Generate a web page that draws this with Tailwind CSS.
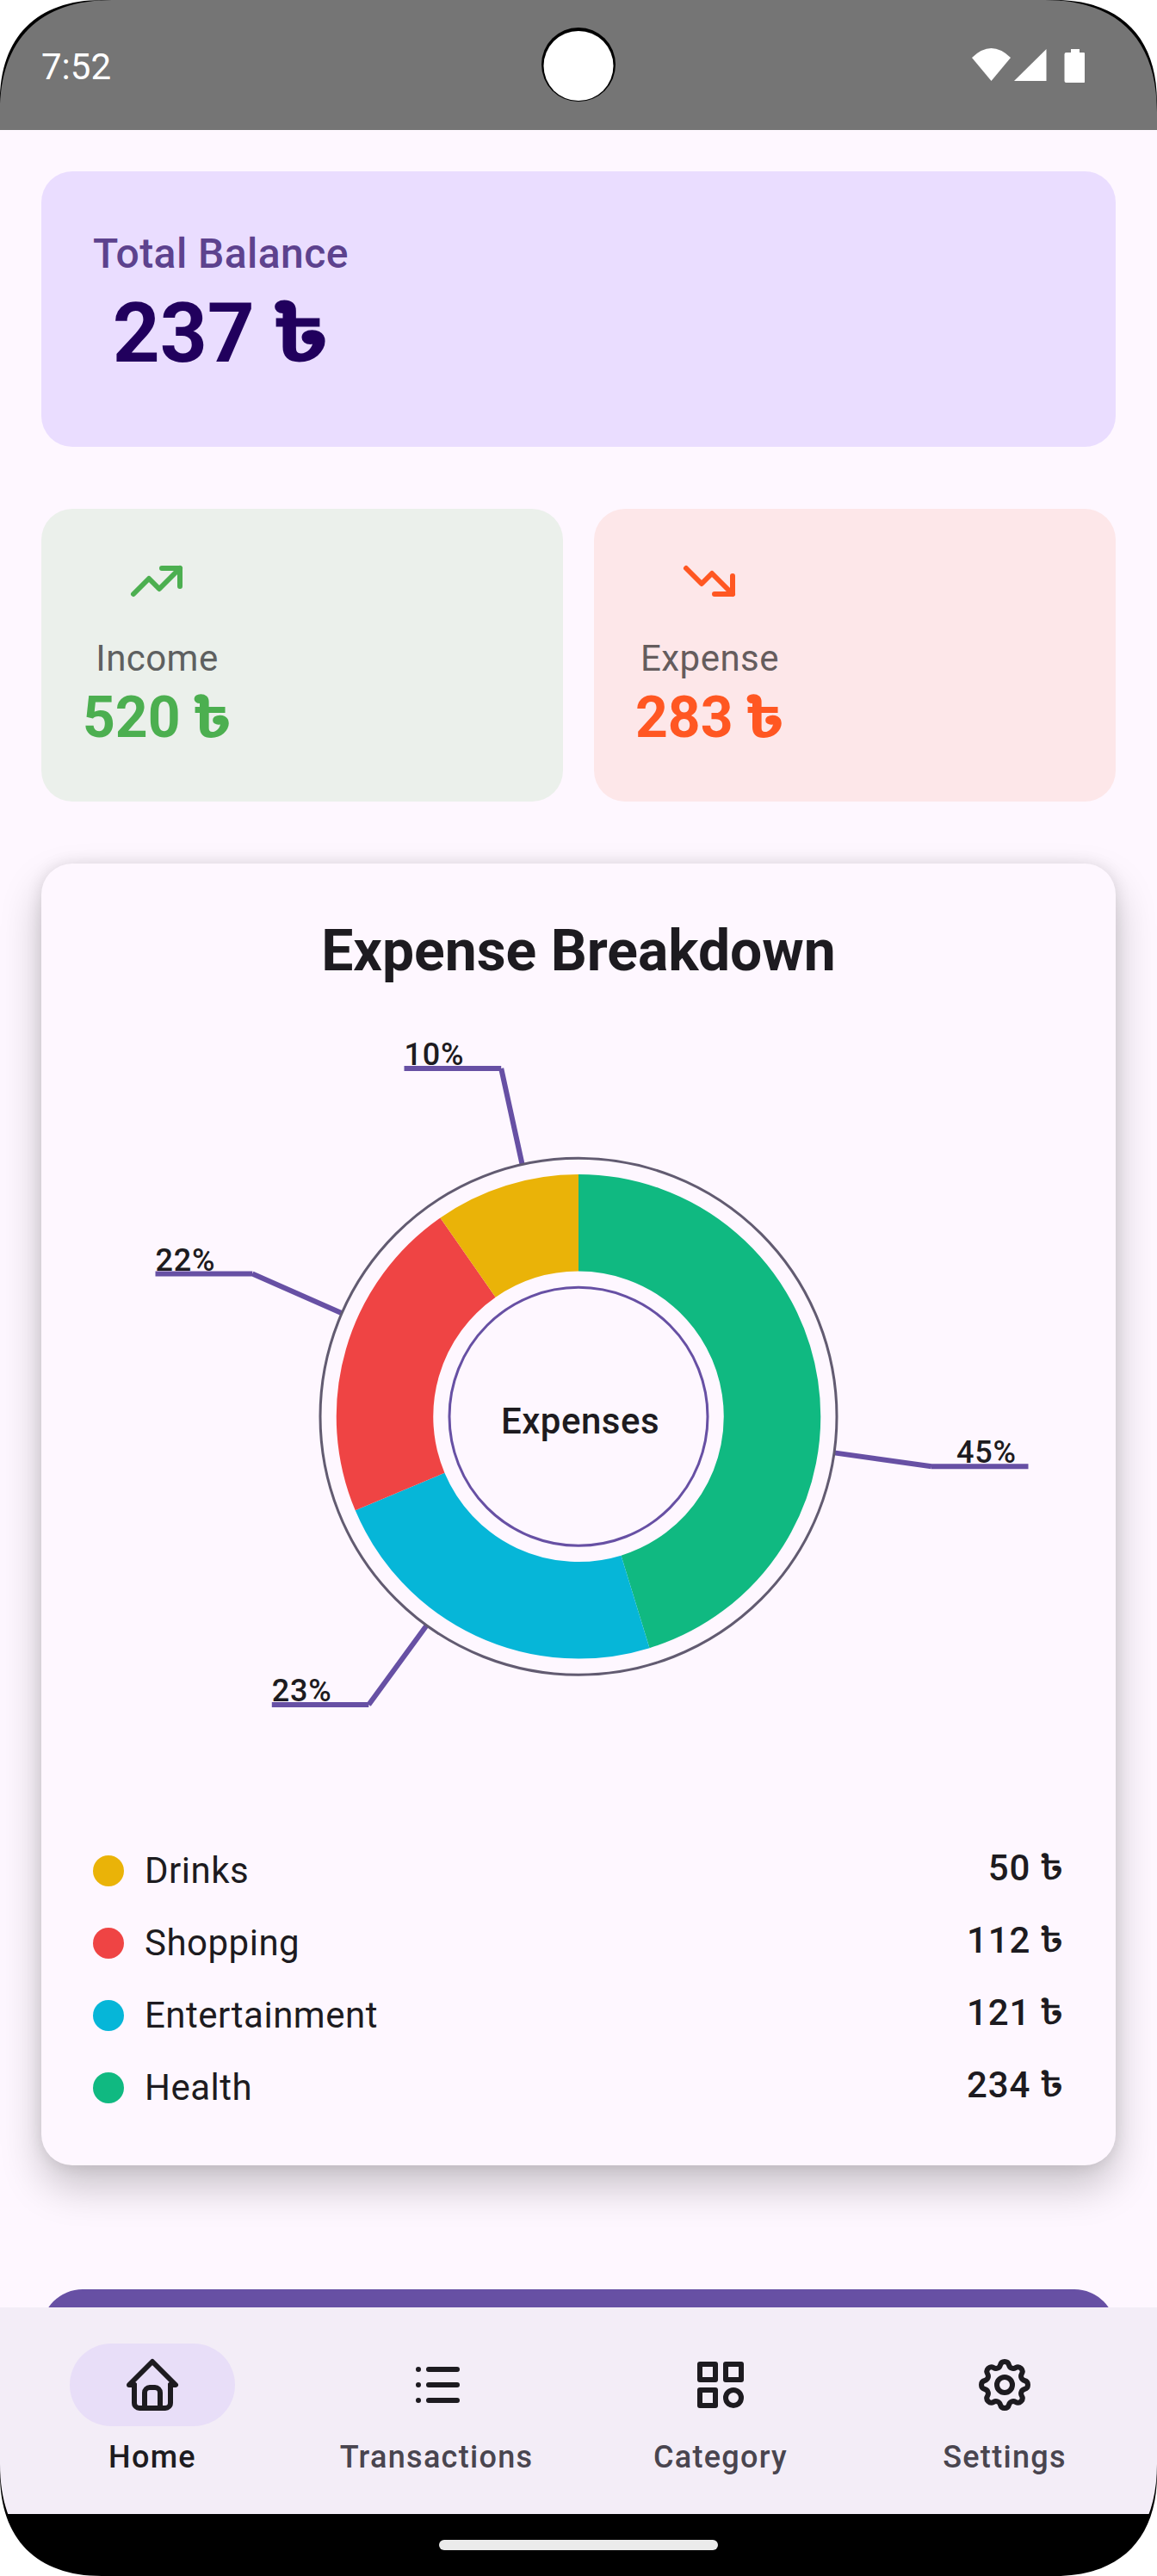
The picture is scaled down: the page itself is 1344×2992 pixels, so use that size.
<!DOCTYPE html>
<html lang="en">
<head>
<meta charset="utf-8">
<title>Expense Tracker</title>
<script src="https://cdn.jsdelivr.net/npm/@tailwindcss/browser@4"></script>
</head>
<body class="bg-white font-['Roboto','Noto_Sans_Bengali','Noto_Sans',sans-serif] text-[#1D1B20]">
<div class="relative flex h-[2992px] w-[1344px] flex-col overflow-hidden bg-[#FEF7FF]">

  <!-- Status bar -->
  <header class="flex h-[151px] shrink-0 items-center justify-between bg-[#757575] pl-12 pr-[84px]">
    <span class="mt-1 text-[42px] leading-[48px] text-white">7:52</span>
    <svg class="h-[42px] w-[131px]" viewBox="0 0 131 42" fill="#fff">
      <path d="M0 12Q22.500 -10 45 12L22.500 39Z"/>
      <path d="M49 39L86.500 2V39Z"/>
      <path d="M115 2h10v4h4.500a2 2 0 0 1 2 2v31a2 2 0 0 1-2 2h-20a2 2 0 0 1-2-2v-31a2 2 0 0 1 2-2h5.500z"/>
    </svg>
  </header>

  <!-- Scrollable content -->
  <main class="flex h-[2529px] shrink-0 flex-col overflow-hidden px-12 pt-12">
    <section class="flex h-[320px] shrink-0 rounded-[36px] bg-[#EADDFF] p-[60px]">
      <div class="flex flex-col items-center">
        <p class="text-[48px] font-medium leading-[72px] tracking-[0.45px] text-[#5D428E]">Total Balance</p>
        <p class="text-[96px] font-bold leading-[113px] text-[#21005D]">237 <span class="inline-block w-[0.65em] origin-[0.3em_80%] scale-x-[1.17] scale-y-[0.93] font-['Noto_Sans_Bengali'] leading-none">৳</span></p>
      </div>
    </section>

    <section class="mt-[72px] flex h-[340px] shrink-0 gap-9">
      <div class="flex flex-1 rounded-[36px] bg-[#EBF0EB] p-12">
        <div class="flex flex-col items-center">
          <svg class="size-[72px]" viewBox="0 0 24 24" fill="none" stroke="#4CAF50" stroke-width="2" stroke-linecap="round" stroke-linejoin="round"><path d="M3 17l6-6l4 4l8-8"/><path d="M14 7h7v7"/></svg>
          <p class="mt-6 text-[42px] leading-[60px] tracking-[0.45px] text-[#5E6060]">Income</p>
          <p class="text-[66px] font-bold leading-[77px] text-[#4CAF50]">520 <span class="inline-block w-[0.65em] origin-[0.3em_80%] scale-x-[1.17] scale-y-[0.93] font-['Noto_Sans_Bengali'] leading-none">৳</span></p>
        </div>
      </div>
      <div class="flex flex-1 rounded-[36px] bg-[#FDE7E9] p-12">
        <div class="flex flex-col items-center">
          <svg class="size-[72px]" viewBox="0 0 24 24" fill="none" stroke="#FF5722" stroke-width="2" stroke-linecap="round" stroke-linejoin="round"><path d="M3 7l6 6l4-4l8 8"/><path d="M21 10v7h-7"/></svg>
          <p class="mt-6 text-[42px] leading-[60px] tracking-[0.45px] text-[#655C5D]">Expense</p>
          <p class="text-[66px] font-bold leading-[77px] text-[#FF5722]">283 <span class="inline-block w-[0.65em] origin-[0.3em_80%] scale-x-[1.17] scale-y-[0.93] font-['Noto_Sans_Bengali'] leading-none">৳</span></p>
        </div>
      </div>
    </section>

    <section class="mt-[72px] flex h-[1512px] shrink-0 flex-col rounded-[36px] bg-[#FEF7FF] px-[60px] pt-[60px] shadow-[0_24px_48px_rgba(0,0,0,0.22),0_0_18px_rgba(0,0,0,0.10)]">
      <h2 class="text-center text-[66px] font-bold leading-[84px]">Expense Breakdown</h2>

      <!-- Donut chart with callouts -->
      <svg class="h-[996px] w-[1128px] shrink-0" viewBox="108 1147 1128 996" fill="none">
        <g stroke="#6750A4" stroke-width="6">
          <path d="M606.500 1352L582.200 1241M582.200 1241H469.500"/>
          <path d="M396.500 1525L293.300 1479.500M293.300 1479.500H180.500"/>
          <path d="M969 1687.400L1082 1703.300M1082 1703.300H1194.500"/>
          <path d="M495.500 1888L428.300 1980M428.300 1980H315.800"/>
        </g>
        <circle cx="672" cy="1645.300" r="300" stroke="#625B71" stroke-width="3"/>
        <g id="slices" stroke-width="112.500"></g>
        <circle cx="672" cy="1645.300" r="150" stroke="#6750A4" stroke-width="3"/>
        <g fill="#1D1B20" class="text-[36px] font-medium tracking-[0.8px]">
          <text x="469.500" y="1237">10%</text>
          <text x="180.500" y="1475.500">22%</text>
          <text x="1111" y="1699">45%</text>
          <text x="315.800" y="1976">23%</text>
        </g>
        <text x="674" y="1665" text-anchor="middle" fill="#1D1B20" class="text-[42px] font-medium tracking-[0.5px]">Expenses</text>
      </svg>

      <ul class="flex flex-col gap-6 text-[42px] leading-[60px]">
        <li class="flex h-[60px] items-center"><span class="mr-6 size-9 rounded-full bg-[#EAB308]"></span><span class="flex-1 tracking-[0.5px]">Drinks</span><span class="-mt-1.5 font-medium tracking-[0.9px]">50 <span class="inline-block w-[0.65em] origin-[0.3em_80%] scale-x-[1.17] scale-y-[0.93] font-['Noto_Sans_Bengali'] leading-none">৳</span></span></li>
        <li class="flex h-[60px] items-center"><span class="mr-6 size-9 rounded-full bg-[#EF4444]"></span><span class="flex-1 tracking-[0.5px]">Shopping</span><span class="-mt-1.5 font-medium tracking-[0.9px]">112 <span class="inline-block w-[0.65em] origin-[0.3em_80%] scale-x-[1.17] scale-y-[0.93] font-['Noto_Sans_Bengali'] leading-none">৳</span></span></li>
        <li class="flex h-[60px] items-center"><span class="mr-6 size-9 rounded-full bg-[#06B6D8]"></span><span class="flex-1 tracking-[0.5px]">Entertainment</span><span class="-mt-1.5 font-medium tracking-[0.9px]">121 <span class="inline-block w-[0.65em] origin-[0.3em_80%] scale-x-[1.17] scale-y-[0.93] font-['Noto_Sans_Bengali'] leading-none">৳</span></span></li>
        <li class="flex h-[60px] items-center"><span class="mr-6 size-9 rounded-full bg-[#10B981]"></span><span class="flex-1 tracking-[0.5px]">Health</span><span class="-mt-1.5 font-medium tracking-[0.9px]">234 <span class="inline-block w-[0.65em] origin-[0.3em_80%] scale-x-[1.17] scale-y-[0.93] font-['Noto_Sans_Bengali'] leading-none">৳</span></span></li>
      </ul>
    </section>

    <div class="mt-36 h-36 shrink-0 rounded-[48px] bg-[#6750A4]"></div>
  </main>

  <!-- Bottom navigation -->
  <nav class="flex h-[240px] shrink-0 gap-6 bg-[#F3EDF7] px-6 pt-[42px] text-[36px] font-medium leading-[48px] tracking-[1.3px] text-[#49454F]">
    <a class="flex flex-1 flex-col items-center gap-3 text-[#1D1B20]">
      <span class="flex h-24 w-48 items-center justify-center rounded-full bg-[#E8DEF8]">
        <svg class="size-[72px]" viewBox="0 0 24 24" fill="none" stroke="#1D1B20" stroke-width="2" stroke-linecap="round" stroke-linejoin="round"><path d="M5 12h-2l9-9l9 9h-2"/><path d="M5 12v7a2 2 0 0 0 2 2h10a2 2 0 0 0 2-2v-7"/><path d="M9 21v-6a2 2 0 0 1 2-2h2a2 2 0 0 1 2 2v6"/></svg>
      </span>Home
    </a>
    <a class="flex flex-1 flex-col items-center gap-3">
      <span class="flex h-24 w-48 items-center justify-center">
        <svg class="size-[72px]" viewBox="0 0 24 24" fill="none" stroke="#1D1B20" stroke-width="2" stroke-linecap="round"><path d="M9 6h11M9 12h11M9 18h11M5 6v.01M5 12v.01M5 18v.01"/></svg>
      </span>Transactions
    </a>
    <a class="flex flex-1 flex-col items-center gap-3">
      <span class="flex h-24 w-48 items-center justify-center">
        <svg class="size-[72px]" viewBox="0 0 24 24" fill="none" stroke="#1D1B20" stroke-width="2" stroke-linecap="round" stroke-linejoin="round"><path d="M4 4h6v6h-6zM14 4h6v6h-6zM4 14h6v6h-6z"/><circle cx="17" cy="17" r="3"/></svg>
      </span>Category
    </a>
    <a class="flex flex-1 flex-col items-center gap-3">
      <span class="flex h-24 w-48 items-center justify-center">
        <svg class="size-[72px]" viewBox="0 0 24 24" fill="none" stroke="#1D1B20" stroke-width="2" stroke-linecap="round" stroke-linejoin="round"><path d="M10.325 4.317c.426-1.756 2.924-1.756 3.350 0a1.724 1.724 0 0 0 2.573 1.066c1.543-.940 3.310.826 2.370 2.370a1.724 1.724 0 0 0 1.065 2.572c1.756.426 1.756 2.924 0 3.350a1.724 1.724 0 0 0-1.066 2.573c.940 1.543-.826 3.310-2.370 2.370a1.724 1.724 0 0 0-2.572 1.065c-.426 1.756-2.924 1.756-3.350 0a1.724 1.724 0 0 0-2.573-1.066c-1.543.940-3.310-.826-2.370-2.370a1.724 1.724 0 0 0-1.065-2.572c-1.756-.426-1.756-2.924 0-3.350a1.724 1.724 0 0 0 1.066-2.573c-.940-1.543.826-3.310 2.370-2.370c1 .608 2.296.070 2.572-1.065z"/><circle cx="12" cy="12" r="3"/></svg>
      </span>Settings
    </a>
  </nav>

  <!-- System gesture bar -->
  <footer class="flex h-[72px] shrink-0 justify-center bg-black pt-[30px]"><div class="h-3 w-[324px] rounded-full bg-[#EBEBEB]"></div></footer>

  <!-- Display cutout and rounded screen corners -->
  <svg class="absolute inset-0 h-[2992px] w-[1344px]" viewBox="0 0 1344 2992">
    <circle cx="672" cy="75" r="43" fill="#000"/>
    <circle cx="672" cy="76.500" r="40.500" fill="#fff"/>
    <defs>
      <g id="corner">
        <path fill="#000" d="M0 0V130C0 46 46 0 130 0Z"/>
        <path fill="#fff" d="M0 0V118C0 43 43 0 118 0Z"/>
      </g>
    </defs>
    <use href="#corner"/>
    <use href="#corner" transform="translate(1344 0) scale(-1 1)"/>
    <use href="#corner" transform="translate(0 2992) scale(1 -1)"/>
    <use href="#corner" transform="translate(1344 2992) scale(-1 -1)"/>
  </svg>
</div>
<script>
  const data = [[234, '#10B981'], [121, '#06B6D8'], [112, '#EF4444'], [50, '#EAB308']];
  const total = data.reduce((s, d) => s + d[0], 0);
  const r = 225, cx = 672, cy = 1645.3;
  const at = a => (cx + r * Math.sin(a)).toFixed(2) + ' ' + (cy - r * Math.cos(a)).toFixed(2);
  let a = 0;
  document.getElementById('slices').innerHTML = data.map(([v, c]) => {
    const b = a + v / total * 2 * Math.PI;
    const p = `<path stroke="${c}" d="M${at(a)}A${r} ${r} 0 ${b - a > Math.PI ? 1 : 0} 1 ${at(b)}"/>`;
    a = b;
    return p;
  }).join('');
</script>
</body>
</html>
